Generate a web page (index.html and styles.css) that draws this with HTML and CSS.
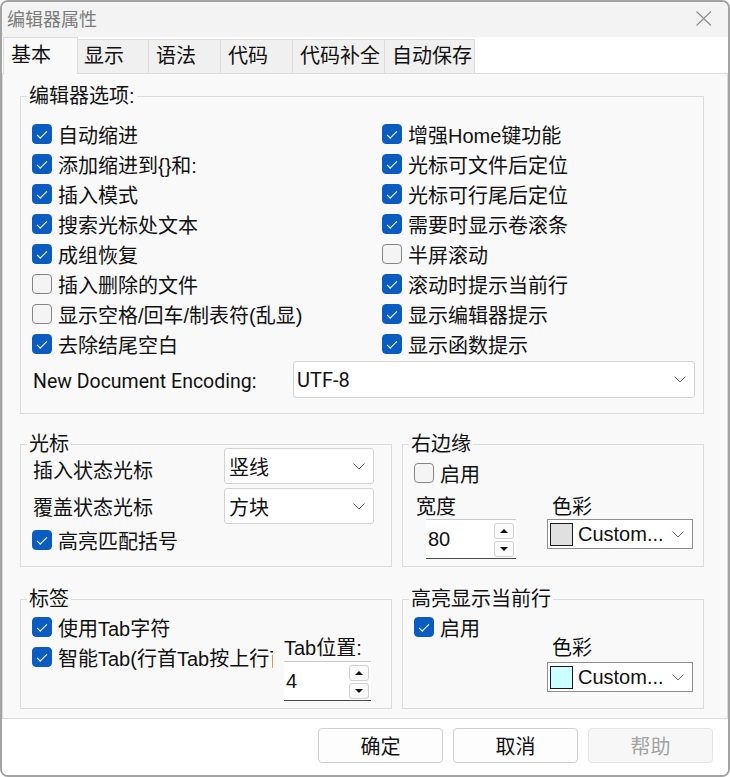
FILE: index.html
```html
<!DOCTYPE html>
<html lang="zh-CN">
<head>
<meta charset="utf-8">
<title>编辑器属性</title>
<link rel="stylesheet" href="styles.css">
</head>
<body>
<div class="window">
  <header class="titlebar">
    <span class="title">编辑器属性</span>
    <svg class="close" width="16" height="15" viewBox="0 0 16 15"><path d="M0.5 0.5L15 14.5M15 0.5L0.5 14.5" stroke="#8c8c8c" stroke-width="1.1" fill="none"/></svg>
  </header>

  <nav class="tabs">
    <div class="tab active">基本</div>
    <div class="tab">显示</div>
    <div class="tab">语法</div>
    <div class="tab">代码</div>
    <div class="tab">代码补全</div>
    <div class="tab">自动保存</div>
  </nav>

  <main class="panel">
    <section class="group group-editor">
      <div class="group-title">编辑器选项:</div>
      <div class="options">
        <label class="check on"><span class="box"></span>自动缩进</label>
        <label class="check on"><span class="box"></span>添加缩进到{}和:</label>
        <label class="check on"><span class="box"></span>插入模式</label>
        <label class="check on"><span class="box"></span>搜索光标处文本</label>
        <label class="check on"><span class="box"></span>成组恢复</label>
        <label class="check"><span class="box"></span>插入删除的文件</label>
        <label class="check"><span class="box"></span>显示空格/回车/制表符(乱显)</label>
        <label class="check on"><span class="box"></span>去除结尾空白</label>

        <label class="check on"><span class="box"></span>增强Home键功能</label>
        <label class="check on"><span class="box"></span>光标可文件后定位</label>
        <label class="check on"><span class="box"></span>光标可行尾后定位</label>
        <label class="check on"><span class="box"></span>需要时显示卷滚条</label>
        <label class="check"><span class="box"></span>半屏滚动</label>
        <label class="check on"><span class="box"></span>滚动时提示当前行</label>
        <label class="check on"><span class="box"></span>显示编辑器提示</label>
        <label class="check on"><span class="box"></span>显示函数提示</label>
      </div>
      <div class="encoding">
        <span class="enc-label">New Document Encoding:</span>
        <div class="select select-enc">
          <span class="select-text latin">UTF-8</span>
          <svg class="chevron" width="12" height="7" viewBox="0 0 12 7"><path d="M0.5 0.5L6 6L11.5 0.5" stroke="#666" fill="none"/></svg>
        </div>
      </div>
    </section>

    <div class="group-row row-mid">
      <section class="group group-caret">
        <div class="group-title">光标</div>
        <div class="caret-grid">
          <span class="caret-label first">插入状态光标</span>
          <div class="select">
            <span class="select-text">竖线</span>
            <svg class="chevron" width="12" height="7" viewBox="0 0 12 7"><path d="M0.5 0.5L6 6L11.5 0.5" stroke="#666" fill="none"/></svg>
          </div>
          <span class="caret-label">覆盖状态光标</span>
          <div class="select">
            <span class="select-text">方块</span>
            <svg class="chevron" width="12" height="7" viewBox="0 0 12 7"><path d="M0.5 0.5L6 6L11.5 0.5" stroke="#666" fill="none"/></svg>
          </div>
        </div>
        <label class="check on caret-check"><span class="box"></span>高亮匹配括号</label>
      </section>

      <section class="group group-side">
        <div class="group-title">右边缘</div>
        <label class="check side-check"><span class="box"></span>启用</label>
        <div class="fields">
          <div class="field field-width">
            <span class="field-label">宽度</span>
            <div class="spin">
              <span class="spin-value">80</span>
              <div class="spin-btns">
                <span class="spin-btn up"></span>
                <span class="spin-btn down"></span>
              </div>
            </div>
          </div>
          <div class="field field-color">
            <span class="field-label">色彩</span>
            <div class="color-combo">
              <span class="swatch swatch-grey"></span>
              <span class="combo-text">Custom...</span>
              <svg class="chevron" width="12" height="7" viewBox="0 0 12 7"><path d="M0.5 0.5L6 6L11.5 0.5" stroke="#666" fill="none"/></svg>
            </div>
          </div>
        </div>
      </section>
    </div>

    <div class="group-row row-low">
      <section class="group group-tabs">
        <div class="group-title">标签</div>
        <div class="tab-body">
          <div class="tab-checks">
            <label class="check on"><span class="box"></span>使用Tab字符</label>
            <label class="check on"><span class="box"></span><span class="clip-text">智能Tab(行首Tab按上行首对齐)</span></label>
          </div>
          <div class="tab-pos">
            <span class="field-label">Tab位置:</span>
            <div class="spin spin-tab">
              <span class="spin-value">4</span>
              <div class="spin-btns">
                <span class="spin-btn up"></span>
                <span class="spin-btn down"></span>
              </div>
            </div>
          </div>
        </div>
      </section>

      <section class="group group-side group-line">
        <div class="group-title">高亮显示当前行</div>
        <label class="check on side-check"><span class="box"></span>启用</label>
        <div class="fields fields-line">
          <div class="field field-color">
            <span class="field-label">色彩</span>
            <div class="color-combo">
              <span class="swatch swatch-cyan"></span>
              <span class="combo-text">Custom...</span>
              <svg class="chevron" width="12" height="7" viewBox="0 0 12 7"><path d="M0.5 0.5L6 6L11.5 0.5" stroke="#666" fill="none"/></svg>
            </div>
          </div>
        </div>
      </section>
    </div>
  </main>

  <footer class="buttons">
    <button class="btn">确定</button>
    <button class="btn">取消</button>
    <button class="btn" disabled>帮助</button>
  </footer>
</div>
</body>
</html>
```

FILE: styles.css
```css
* {
  box-sizing: border-box;
}

html,
body {
  margin: 0;
  padding: 0;
  background: #ffffff;
}

body {
  font-family: "Liberation Sans", "Noto Sans CJK SC", sans-serif;
  font-size: 20px;
  color: #111111;
}

/* dialog frame */
.window {
  width: 730px;
  height: 777px;
  border: 2px solid #a3a3a3;
  border-radius: 8px;
  overflow: hidden;
  background: #ffffff;
  display: flex;
  flex-direction: column;
}

.titlebar {
  flex: none;
  height: 35px;
  background: #f3f3f3;
  display: flex;
  align-items: center;
  padding: 0 16px 0 5px;
}

.title {
  font-size: 18px;
  line-height: 22px;
  color: #7b7b7b;
}

.close {
  margin-left: auto;
  margin-top: -2px;
}

/* tab strip */
.tabs {
  flex: none;
  height: 36px;
  display: flex;
  align-items: flex-end;
  padding-left: 1px;
  background: #ffffff;
}

.tab {
  height: 34px;
  line-height: 32px;
  padding-left: 7px;
  border: 1px solid #dcdcdc;
  border-bottom: none;
  background: #f0f0f0;
  white-space: nowrap;
}

.tab + .tab {
  margin-left: -1px;
}

.tab.active {
  position: relative;
  z-index: 1;
  height: 37px;
  line-height: 34px;
  margin-bottom: -1px;
  background: #f9f9f9;
}

.tab:nth-child(1) { width: 75px; }
.tab:nth-child(2) { width: 72px; padding-left: 6px; }
.tab:nth-child(3) { width: 73px; }
.tab:nth-child(4) { width: 73px; }
.tab:nth-child(5) { width: 93px; }
.tab:nth-child(6) { width: 91px; }

/* page body */
.panel {
  flex: none;
  height: 646px;
  border: 1px solid #dcdcdc;
  background: #f9f9f9;
  padding: 22px 23px 0 17px;
}

.group {
  border: 1px solid #dcdcdc;
}

.group-title {
  width: fit-content;
  margin: -12px 0 -10px 6px;
  padding: 0 2px;
  line-height: 22px;
  background: #f9f9f9;
  white-space: nowrap;
}

/* groups with inner left padding pull their caption back to the frame edge */
.group-caret .group-title,
.group-side .group-title,
.group-tabs .group-title {
  margin-left: -5px;
}

.group-editor {
  height: 318px;
}

.group-row {
  display: flex;
  gap: 10px;
}

.row-mid {
  margin-top: 30px;
  height: 123px;
}

.row-low {
  margin-top: 32px;
  height: 110px;
}

.group-caret,
.group-tabs {
  width: 372px;
}

.group-side {
  width: 302px;
}

/* checkboxes */
.check {
  display: flex;
  align-items: center;
  gap: 6px;
  height: 30px;
  white-space: nowrap;
}

.box {
  flex: none;
  width: 20px;
  height: 20px;
  border: 1px solid #858585;
  border-radius: 4px;
  background: #f4f4f4;
  display: flex;
  align-items: center;
  justify-content: center;
}

.check.on .box {
  background: #0b5cc1;
  border-color: #0b5cc1;
}

.check.on .box::after {
  content: "";
  width: 9px;
  height: 4px;
  margin-top: -2px;
  border-left: 1.3px solid #ffffff;
  border-bottom: 1.3px solid #ffffff;
  transform: rotate(-45deg);
}

.options {
  margin-top: 22px;
  padding-left: 11px;
  display: grid;
  grid-template-rows: repeat(8, 30px);
  grid-template-columns: 350px 1fr;
  grid-auto-flow: column;
}

/* encoding row */
.encoding {
  margin-top: 2px;
  padding-left: 12px;
  height: 37px;
  display: flex;
  align-items: center;
}

.enc-label {
  width: 260px;
  font-family: Roboto, "Liberation Sans", sans-serif;
  font-size: 19.5px;
  padding-top: 3px;
}

.select {
  display: flex;
  align-items: center;
  height: 36px;
  background: #ffffff;
  border: 1px solid #d3d3d3;
  border-radius: 3px;
  padding: 0 8px 0 4px;
}

.select-enc {
  width: 402px;
  height: 37px;
  padding-left: 3px;
}

.latin {
  font-family: Roboto, "Liberation Sans", sans-serif;
  font-size: 20px;
}

.chevron {
  margin-left: auto;
}

/* caret group */
.group-caret {
  padding-left: 11px;
}

.caret-grid {
  margin-top: 3px;
  display: grid;
  grid-template-columns: 192px 150px;
  grid-template-rows: 36px 36px;
  row-gap: 4px;
  align-items: center;
}

.caret-label {
  padding-left: 1px;
}

.caret-label.first {
  padding-top: 6px;
}

.caret-check {
  margin-top: 1px;
}

/* right-hand groups */
.group-side {
  padding-left: 11px;
}

.side-check {
  margin-top: 13px;
}

.group-line .side-check {
  margin-top: 12px;
}

.fields {
  margin-top: 8px;
  display: grid;
  grid-template-columns: 133px 146px;
}

.fields-line {
  margin-top: -5px;
}

.fields-line .field-color {
  grid-column: 2;
}

.field-label {
  display: block;
  line-height: 22px;
}

.field-width .field-label {
  padding-left: 2px;
  margin-bottom: 1px;
}

.field-width .spin {
  margin-left: 12px;
}

.field-color .field-label {
  padding-left: 5px;
  margin-bottom: 1px;
}

.fields-line .field-color .field-label {
  margin-bottom: 3px;
}

/* spin boxes */
.spin {
  width: 90px;
  height: 40px;
  background: #ffffff;
  border-top: 1px solid #c9c9c9;
  border-bottom: 1px solid #4a4a4a;
  display: flex;
  align-items: center;
  padding: 0 2px 0 2px;
}

.spin-value {
  padding-top: 1px;
}

.spin-btns {
  margin-left: auto;
  display: flex;
  flex-direction: column;
  gap: 2px;
  margin-top: 1px;
}

.spin-btn {
  width: 20px;
  height: 16px;
  border: 1px solid #d0d0d0;
  border-radius: 3px;
  background: #fbfbfb;
  display: flex;
  align-items: center;
  justify-content: center;
}

.spin-btn.up::after {
  content: "";
  border-left: 4px solid transparent;
  border-right: 4px solid transparent;
  border-bottom: 4px solid #111111;
}

.spin-btn.down::after {
  content: "";
  border-left: 4px solid transparent;
  border-right: 4px solid transparent;
  border-top: 4px solid #111111;
}

.spin-tab {
  width: 87px;
}

/* colour pickers */
.color-combo {
  width: 146px;
  height: 30px;
  background: #ffffff;
  border: 1px solid #8e8e8e;
  display: flex;
  align-items: center;
  padding: 0 8px 0 2px;
}

.swatch {
  flex: none;
  width: 23px;
  height: 23px;
  border: 1px solid #1a1a1a;
}

.swatch-grey {
  background: #e0e0e0;
}

.swatch-cyan {
  background: #ccffff;
}

.combo-text {
  margin-left: 5px;
  padding-top: 1px;
}

/* tabulation group */
.group-tabs {
  padding-left: 11px;
}

.tab-body {
  display: flex;
}

.tab-checks {
  width: 241px;
  margin-top: 12px;
  overflow: hidden;
}

.tab-checks .check {
  overflow: hidden;
}

.clip-text {
  min-width: 0;
  overflow: hidden;
  white-space: nowrap;
}

.tab-pos {
  margin-left: 11px;
  margin-top: 37px;
}

.tab-pos .field-label {
  margin-bottom: 2px;
}

/* dialog buttons */
.buttons {
  flex: 1;
  display: flex;
  justify-content: flex-end;
  gap: 10px;
  padding: 9px 15px 0 0;
  background: #ffffff;
}

.btn {
  width: 125px;
  height: 35px;
  border: 1px solid #d0d0d0;
  border-radius: 4px;
  background: #fdfdfd;
  font-family: "Liberation Sans", "Noto Sans CJK SC", sans-serif;
  font-size: 20px;
  color: #111111;
  padding: 0;
}

.btn:disabled {
  background: #f7f7f7;
  border-color: #e5e5e5;
  color: #a3a3a3;
}
```
